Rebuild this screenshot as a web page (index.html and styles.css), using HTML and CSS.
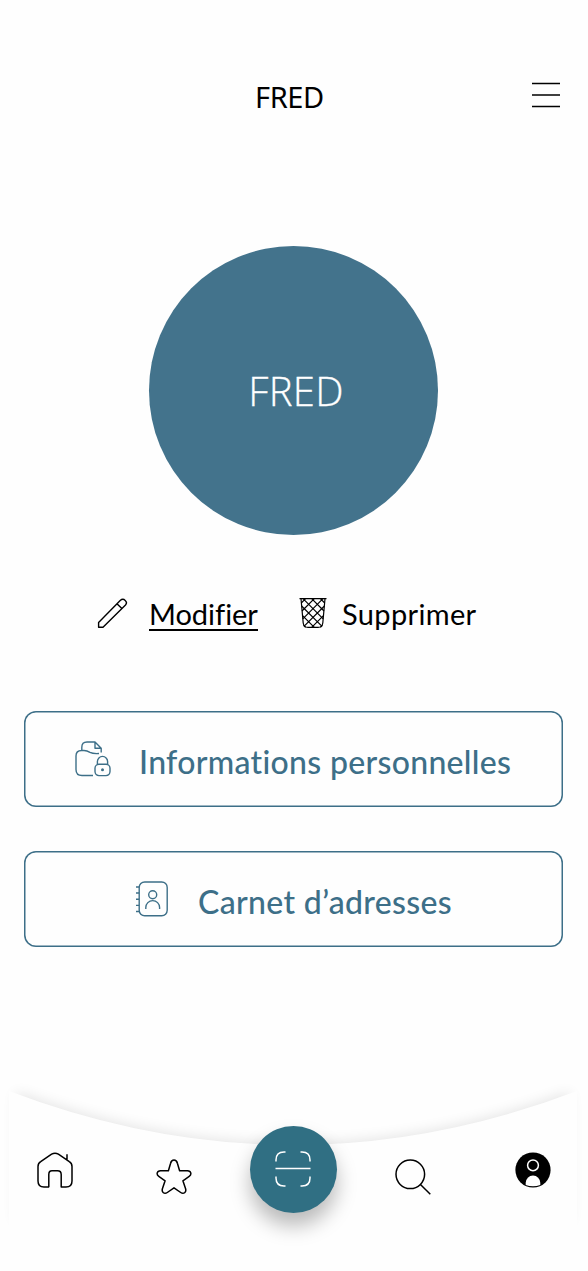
FILE: index.html
```html
<!DOCTYPE html>
<html lang="fr">
<head>
<meta charset="utf-8">
<title>Profil</title>
<link rel="stylesheet" href="styles.css">
</head>
<body>
<div class="screen">
  <header class="topbar">
    <h1 class="title">FRED</h1>
    <svg class="menu" width="28" height="26" viewBox="0 0 28 26"><path d="M0 1.5H28M0 13H28M0 24.5H28"/></svg>
  </header>
  <main class="content">
    <div class="avatar"><span class="avatar-name">FRED</span></div>
    <div class="actions">
      <a class="action edit">
        <svg class="line" width="32" height="32" viewBox="0 0 32 32"><path d="M2.6 30.2V25.4L24.2 3.6Q26.8 1.2 29.2 3.4T29.5 8L7 30.2ZM21.2 6.9L25.9 11.5"/></svg>
        <span class="edit-label">Modifier</span>
      </a>
      <a class="action delete">
        <svg class="line" width="28" height="32" viewBox="0 0 28 32"><path d="M.5 1.7H27.5M2 1.7L4.2 26Q4.8 30.4 9 30.4H19Q23.2 30.4 23.8 26L26 1.7"/><path d="M2.3 6L6.6 1.7M3 14L15.3 1.7M3.8 21.9L24 1.7M5.2 29.2L25.4 9M12.7 30.4L24.7 18.4M21.4 30.4L23.5 28.3M25.7 6L21.4 1.7M25 14L12.7 1.7M24.2 21.9L4 1.7M22.8 29.2L2.6 9M15.3 30.4L3.3 18.4M6.6 30.4L4.5 28.3"/></svg>
        <span class="delete-label">Supprimer</span>
      </a>
    </div>
    <div class="cards">
      <a class="card info">
        <svg class="line" width="36" height="36" viewBox="0 0 36 36"><path d="M18 34.5H7Q1 34.5 1 28.5V15Q1 9.5 6.5 9.5H9Q12 9.5 15 11.4Q18 12.9 24 12.5M6.8 9.5V6.5Q6.8 1 12 1H20L26.2 7.2V11.5M20 1V7.2H26.2"/><rect x="20" y="23.3" width="15" height="11.3" rx="4"/><path d="M22.4 23V20.5A5.1 5.1 0 0 1 32.6 20.5V23"/><circle class="dot" cx="27.5" cy="28.7" r="1.5"/></svg>
        <span class="info-label">Informations personnelles</span>
      </a>
      <a class="card book">
        <svg class="line" width="34" height="36" viewBox="0 0 34 36"><rect x="4.2" y="1" width="28" height="33.8" rx="5.5"/><path d="M1 6H4.2M1 12H4.2M1 18.2H4.2M1 24.4H4.2M1 30.5H4.2M10.8 28V26.5A6.9 6.9 0 0 1 24.6 26.5V28"/><circle cx="17.7" cy="13.8" r="4"/></svg>
        <span class="book-label">Carnet d’adresses</span>
      </a>
    </div>
  </main>
  <nav class="tabbar">
    <svg class="tabbar-shape" width="588" height="172" viewBox="0 0 588 172">
      <defs>
        <filter id="soft" x="-10%" y="-20%" width="120%" height="140%"><feGaussianBlur stdDeviation="7"/></filter>
        <clipPath id="edge"><rect width="588" height="162"/></clipPath>
      </defs>
      <g clip-path="url(#edge)">
        <path class="shade" filter="url(#soft)" d="M16 21Q293 124 570 21V150H16Z"/>
        <path class="sheet" d="M9 20Q293 128 577 20V162H9Z"/>
      </g>
    </svg>
    <a class="tab home"><svg class="line tab-icon" width="36" height="36" viewBox="0 0 36 36"><path d="M12.2 35H7Q1 35 1 29V14.5Q1 11.3 3.7 9.6L14.6 2.2Q18 .1 21.4 2.2L32.3 9.6Q35 11.3 35 14.5V29Q35 35 29 35H24.2V22.5Q24.2 18.8 20.5 18.8H15Q11.8 18.8 11.8 22.5V35M30 8V2.2"/></svg></a>
    <a class="tab star"><svg class="line tab-icon" width="36" height="36" viewBox="0 0 36 36"><path d="M14.6 4.2Q15.4 1 18 1T21.4 4.2L23.6 11.8H31.5C35.2 11.8 35.9 15.6 33.2 17.4L26.9 21.8L29.6 29.7C30.6 33.3 27.6 35.6 24.7 33.5L18 28.8L11.3 33.5C8.4 35.6 5.4 33.3 6.4 29.7L9.1 21.8L2.8 17.4C.1 15.6.8 11.8 4.5 11.8H12.4Z"/></svg></a>
    <a class="scan"><svg class="scan-icon" width="36" height="36" viewBox="0 0 36 36"><path d="M1 10.5V9Q1 1 9 1H10.5M25.5 1H27Q35 1 35 9V10.5M35 25.5V27Q35 35 27 35H25.5M10.5 35H9Q1 35 1 27V25.5M.5 17.4H35.5"/></svg></a>
    <a class="tab search"><svg class="line tab-icon" width="36" height="36" viewBox="0 0 36 36"><circle cx="15.3" cy="15.3" r="14.3"/><path d="M25.2 25.2L35.3 35.3"/></svg></a>
    <a class="tab profile"><svg width="36" height="36" viewBox="0 0 36 36"><circle cx="18" cy="18" r="17.6"/><circle class="face" cx="18" cy="13.3" r="5.4"/><path class="bust" d="M10.7 33V30.8A7.3 7.3 0 0 1 25.3 30.8V33Q18 35.6 10.7 33Z"/></svg></a>
  </nav>
</div>
</body>
</html>
```
FILE: styles.css
```css
body { margin: 0; background: #fefefe; color: #000; font-family: Lato, sans-serif; font-variant-ligatures: none; }
.screen { box-sizing: border-box; width: 588px; height: 1271px; display: flex; flex-direction: column; overflow: hidden; }
.topbar { height: 130px; padding: 81px 28px 0 255px; box-sizing: border-box; display: flex; justify-content: space-between; }
.title { margin: 0; font: 400 29px/32px "Noto Sans", sans-serif; letter-spacing: -.4px; }
.menu { margin-top: 1px; fill: none; stroke: #000; stroke-width: 1.5; }
.line { fill: none; stroke: currentColor; stroke-width: 1.4; stroke-linejoin: round; flex: none; }
.content { display: flex; flex-direction: column; height: 941px; }
.avatar { width: 289px; height: 289px; margin: 116px 0 0 149px; border-radius: 50%; background: #43738c; color: #fff; display: flex; align-items: center; justify-content: center; }
.avatar-name { font: 300 40px/48px "Open Sans", sans-serif; letter-spacing: .3px; padding-left: 5px; padding-top: 1px; -webkit-text-stroke: .3px #fff; }
.actions { display: flex; margin: 60px 0 0 96px; height: 40px; font-size: 29px; line-height: 36px; white-space: nowrap; }
.action { display: flex; align-items: flex-start; }
.action .line { margin-top: 2px; }
.edit { width: 203px; gap: 21px; }
.delete { gap: 15px; }
.action span { padding-top: 1px; }
.edit-label { height: 36px; box-sizing: border-box; border-bottom: 2px solid #000; letter-spacing: -.03px; }
.delete-label { letter-spacing: .35px; }
.delete .line { stroke-width: 1.2; }
.cards { display: flex; flex-direction: column; gap: 44px; padding: 76px 25px 0 24px; }
.card { box-sizing: border-box; height: 96px; box-shadow: inset 0 0 0 1.5px #3d6f88; border-radius: 12px; display: flex; align-items: center; color: #3d6f88; font-size: 32px; font-weight: 500; line-height: 40px; white-space: nowrap; }
.card .line { margin-bottom: 1px; }
.info { padding-left: 51px; gap: 28px; }
.book { padding-left: 111px; gap: 29px; }
.card span { padding-top: 6px; }
.info-label { letter-spacing: .31px; }
.book-label { letter-spacing: .35px; }
.dot { fill: currentColor; stroke: none; }
.tabbar { position: relative; display: flex; align-items: flex-start; height: 200px; padding: 55px 0 0 37px; box-sizing: border-box; }
.tabbar-shape { position: absolute; inset: 0 auto auto 0; z-index: -1; }
.shade { fill: #000; opacity: .1; }
.sheet { fill: #fefefe; }
.tab { width: 36px; height: 36px; padding-top: 26px; }
.tab-icon { stroke-width: 1.5; }
.star { margin-left: 83px; padding-top: 33px; }
.search { margin-left: 58px; padding-top: 33px; }
.profile { margin-left: 84px; }
.scan { width: 87px; height: 87px; margin-left: 58px; border-radius: 50%; background: #306f83; box-shadow: 0 13px 20px rgba(0,0,0,.27); display: flex; align-items: center; justify-content: center; }
.scan-icon { fill: none; stroke: #fff; stroke-width: 1.5; margin: 0 1px 1px 0; }
.face { fill: none; stroke: #fff; stroke-width: 1.5; }
.bust { fill: #fff; }
```
